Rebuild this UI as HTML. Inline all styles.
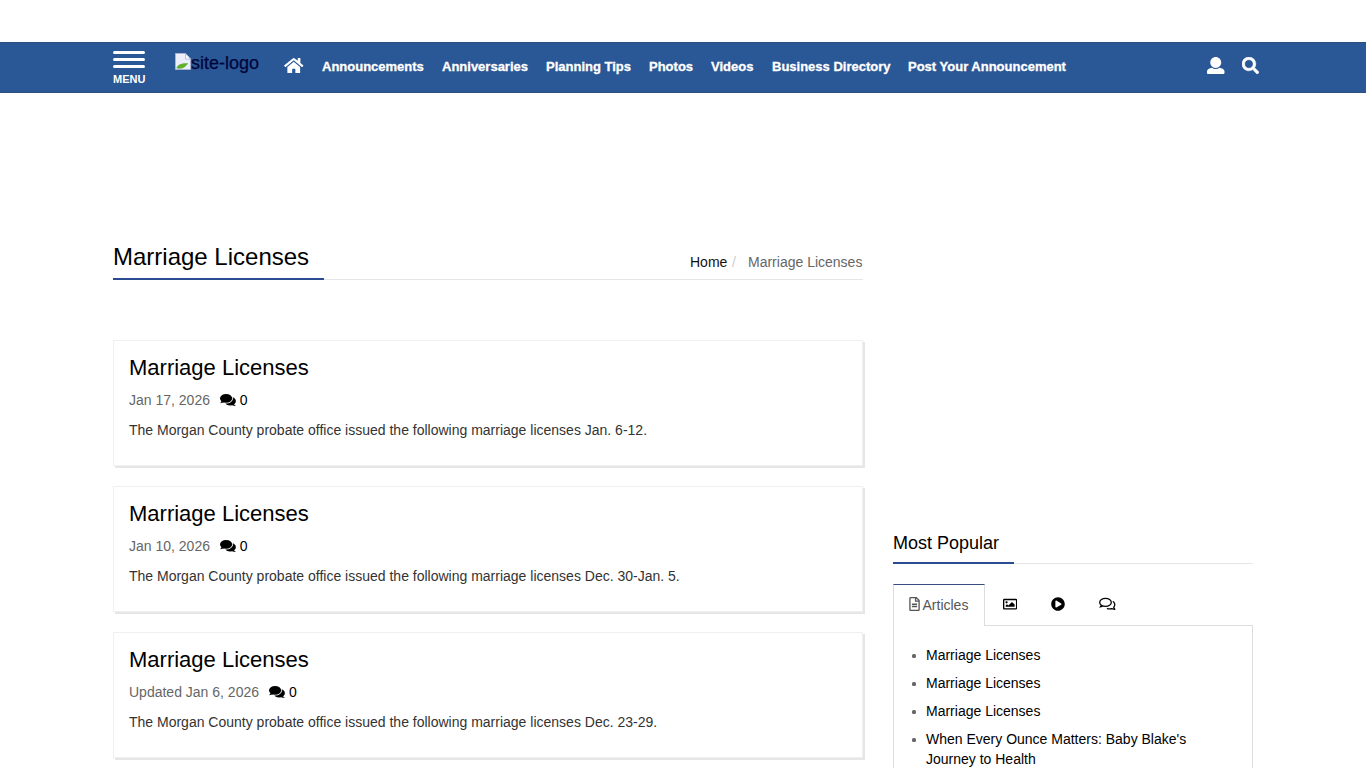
<!DOCTYPE html>
<html lang="en">
<head>
<meta charset="utf-8">
<title>Marriage Licenses</title>
<style>
*{box-sizing:border-box}
html,body{margin:0;padding:0}
body{width:1366px;height:768px;overflow:hidden;background:#fff;font-family:"Liberation Sans",Arial,sans-serif;font-size:14px;line-height:20px;color:#333;position:relative}
a{color:#000;text-decoration:none}
#nav{position:absolute;left:0;top:42px;width:1366px;height:51px;background:#2a5796;box-shadow:inset 0 1px 0 #2e4f80,inset 0 -1px 0 #2e4f80}
#nav .bar{position:absolute;left:113px;width:32px;height:3px;background:#fff;border-radius:1.5px}
#nav .menu{position:absolute;left:113px;top:31px;font-size:11px;line-height:12px;font-weight:bold;color:#fff}
#logo{position:absolute;left:175px;top:10px;height:22px;white-space:nowrap;font-size:18px;line-height:22px;color:#00053a}
#logo svg{position:absolute;left:0;top:1px}
#logo span{position:absolute;left:16px;top:0;-webkit-text-stroke:.25px #00053a}
#nav .home{position:absolute;left:284px;top:15px}
#nav .lnk{position:absolute;top:17px;font-size:13px;line-height:16px;font-weight:bold;color:#fff;white-space:nowrap;-webkit-text-stroke:.3px #fff}
#nav .user{position:absolute;left:1207px;top:14.500px}
#nav .search{position:absolute;left:1242px;top:15px}
h1{position:absolute;left:113px;top:242px;margin:0;font-size:24px;line-height:30px;font-weight:normal;color:#000;white-space:nowrap}
.hline{position:absolute;left:113px;top:279px;width:750px;height:1px;background:#e6e6e6}
.hline2{position:absolute;left:113px;top:278px;width:211px;height:2px;background:#2a4a92}
.crumb{position:absolute;top:252px;font-size:14px;line-height:20px;white-space:nowrap}
.card{position:absolute;left:113px;width:750px;height:126px;background:#fff;border:1px solid #f0f0f0;box-shadow:2px 2px 0 #e6e6e6}
.card h3{position:absolute;left:15px;top:13px;margin:0;font-size:22px;line-height:28px;font-weight:normal;color:#000;white-space:nowrap}
.card .meta{position:absolute;left:15px;top:49px;font-size:14px;line-height:20px;color:#666;white-space:nowrap}
.card .meta b{font-weight:normal;color:#000}
.card .meta svg{vertical-align:-2px;margin:0 3px 0 5px}
.card p{position:absolute;left:15px;top:79px;margin:0;font-size:14px;line-height:20px;color:#333;white-space:nowrap}
#mp{position:absolute;left:893px;top:531px;font-size:18px;line-height:24px;color:#000;white-space:nowrap}
.mpl{position:absolute;left:893px;top:563px;width:360px;height:1px;background:#e6e6e6}
.mpl2{position:absolute;left:893px;top:562px;width:121px;height:2px;background:#2a4a92}
#tabbox{position:absolute;left:893px;top:625px;width:360px;height:160px;border:1px solid #ddd}
#tab1{position:absolute;left:893px;top:584px;width:92px;height:42px;border:1px solid #ddd;border-top:1px solid #35507f;border-bottom:none;background:#fff}
#tab1 span{position:absolute;left:28.500px;top:10px;font-size:14px;line-height:20px;color:#555}
#tab1 svg{position:absolute;left:15px;top:12px}
.ti{position:absolute;top:597px}
ul{position:absolute;left:893px;top:645px;margin:0;padding:0;list-style:none;width:360px}
li{position:relative;padding-left:33px;font-size:14px;line-height:20px;color:#000;margin-bottom:8px}
li:before{content:"";position:absolute;left:18.500px;top:8.500px;width:4px;height:4px;border-radius:1.500px;background:#666}
</style>
</head>
<body>
<div id="nav">
  <div class="bar" style="top:9px"></div><div class="bar" style="top:16px"></div><div class="bar" style="top:23px"></div>
  <div class="menu">MENU</div>
  <div id="logo">
    <svg width="16" height="17" viewBox="0 0 16 17"><path d="M0.500 0.500h10l5 5.500v10.500h-15z" fill="#eceefc" stroke="#a9b3d6" stroke-width="1"/><path d="M10.500 0.500v5.500h5z" fill="#fff" stroke="#a9b3d6" stroke-width=".8"/><path d="M1.500 15.300C2 12 6.500 10 13.200 10.400L9.800 14C7.600 15.800 4 16 1.500 15.300z" fill="#5fb02b"/></svg>
    <span>site-logo</span>
  </div>
  <svg class="home" width="19.500" height="17" viewBox="0 0 576 512"><path fill="#fff" d="M280.4 148.3L96 300.1V464a16 16 0 0 0 16 16l112.100-.3a16 16 0 0 0 15.900-16V368a16 16 0 0 1 16-16h64a16 16 0 0 1 16 16v95.600a16 16 0 0 0 16 16.100L464 480a16 16 0 0 0 16-16V300L295.700 148.300a12.200 12.200 0 0 0-15.300 0zM571.600 251.500L488 182.600V44a12 12 0 0 0-12-12h-56a12 12 0 0 0-12 12v72.600L318.500 43a48 48 0 0 0-61 0L4.300 251.500a12 12 0 0 0-1.600 16.900l25.500 31a12 12 0 0 0 16.900 1.600l235.200-193.700a12.200 12.200 0 0 1 15.300 0L530.900 301a12 12 0 0 0 16.900-1.600l25.500-31a12 12 0 0 0-1.700-16.900z"/></svg>
  <a class="lnk" style="left:322px">Announcements</a>
  <a class="lnk" style="left:442px">Anniversaries</a>
  <a class="lnk" style="left:546px">Planning Tips</a>
  <a class="lnk" style="left:649px">Photos</a>
  <a class="lnk" style="left:711px">Videos</a>
  <a class="lnk" style="left:772px">Business Directory</a>
  <a class="lnk" style="left:908px">Post Your Announcement</a>
  <svg class="user" width="17.500" height="17.500" viewBox="0 0 512 512"><path fill="#fff" d="M256 0c88.400 0 160 71.600 160 160s-71.600 160-160 160S96 248.400 96 160 167.600 0 256 0zm183.300 333.800l-71.300-17.800c-74.900 53.900-165.700 41.900-223.900 0l-71.300 17.800C30 344.500 0 382.900 0 427V464c0 26.500 21.500 48 48 48h416c26.500 0 48-21.500 48-48v-37c0-44.100-30-82.500-72.700-93.200z"/></svg>
  <svg class="search" width="17" height="17" viewBox="0 0 512 512"><path fill="#fff" stroke="#fff" stroke-width="14" d="M505 442.700L405.300 343c-4.500-4.500-10.600-7-17-7H372c27.600-35.300 44-79.700 44-128C416 93.100 322.900 0 208 0S0 93.100 0 208s93.100 208 208 208c48.300 0 92.700-16.400 128-44v16.300c0 6.400 2.500 12.500 7 17l99.700 99.700c9.400 9.400 24.600 9.400 33.900 0l28.300-28.300c9.400-9.400 9.400-24.600.1-34zM208 336c-70.700 0-128-57.200-128-128 0-70.700 57.200-128 128-128 70.700 0 128 57.200 128 128 0 70.700-57.200 128-128 128z"/></svg>
</div>

<h1>Marriage Licenses</h1>
<div class="hline"></div><div class="hline2"></div>
<a class="crumb" style="left:690px;color:#111">Home</a>
<span class="crumb" style="left:732px;color:#ccc">/</span>
<span class="crumb" style="left:748px;color:#666">Marriage Licenses</span>

<div class="card" style="top:340px">
  <h3>Marriage Licenses</h3>
  <div class="meta">Jan 17, 2026 <svg width="18" height="14" viewBox="0 0 18 14"><ellipse cx="11.300" cy="8.100" rx="5.600" ry="4.300" fill="#000"/><path d="M14.500 11l2.500 2-3.600-.500z" fill="#000"/><ellipse cx="7.100" cy="5.300" rx="7" ry="5.300" fill="#fff"/><ellipse cx="7.100" cy="5.300" rx="6.100" ry="4.400" fill="#000"/><path d="M2.800 7.800L1.200 10.300 5.400 9.200z" fill="#000"/></svg><b>0</b></div>
  <p>The Morgan County probate office issued the following marriage licenses Jan. 6-12.</p>
</div>
<div class="card" style="top:486px">
  <h3>Marriage Licenses</h3>
  <div class="meta">Jan 10, 2026 <svg width="18" height="14" viewBox="0 0 18 14"><ellipse cx="11.300" cy="8.100" rx="5.600" ry="4.300" fill="#000"/><path d="M14.500 11l2.500 2-3.600-.500z" fill="#000"/><ellipse cx="7.100" cy="5.300" rx="7" ry="5.300" fill="#fff"/><ellipse cx="7.100" cy="5.300" rx="6.100" ry="4.400" fill="#000"/><path d="M2.800 7.800L1.200 10.300 5.400 9.200z" fill="#000"/></svg><b>0</b></div>
  <p>The Morgan County probate office issued the following marriage licenses Dec. 30-Jan. 5.</p>
</div>
<div class="card" style="top:632px">
  <h3>Marriage Licenses</h3>
  <div class="meta">Updated Jan 6, 2026 <svg width="18" height="14" viewBox="0 0 18 14"><ellipse cx="11.300" cy="8.100" rx="5.600" ry="4.300" fill="#000"/><path d="M14.500 11l2.500 2-3.600-.500z" fill="#000"/><ellipse cx="7.100" cy="5.300" rx="7" ry="5.300" fill="#fff"/><ellipse cx="7.100" cy="5.300" rx="6.100" ry="4.400" fill="#000"/><path d="M2.800 7.800L1.200 10.300 5.400 9.200z" fill="#000"/></svg><b>0</b></div>
  <p>The Morgan County probate office issued the following marriage licenses Dec. 23-29.</p>
</div>

<div id="mp">Most Popular</div>
<div class="mpl"></div><div class="mpl2"></div>
<div id="tabbox"></div>
<div id="tab1">
  <svg width="11" height="14" viewBox="0 0 384 512"><path fill="#555" d="M288 248v28c0 6.600-5.400 12-12 12H108c-6.600 0-12-5.400-12-12v-28c0-6.600 5.400-12 12-12h168c6.600 0 12 5.400 12 12zm-12 72H108c-6.600 0-12 5.400-12 12v28c0 6.600 5.400 12 12 12h168c6.600 0 12-5.400 12-12v-28c0-6.600-5.400-12-12-12zm108-188.100V464c0 26.500-21.500 48-48 48H48c-26.500 0-48-21.500-48-48V48C0 21.500 21.500 0 48 0h204.100C264.800 0 277 5.100 286 14.100L369.900 98c9 8.900 14.100 21.200 14.100 33.900zm-128-80V128h76.100L256 51.900zM336 464V176H232c-13.300 0-24-10.700-24-24V48H48v416h288z"/></svg>
  <span>Articles</span>
</div>
<svg class="ti" style="left:1002.600px;top:597.300px" width="14.300" height="14.300" viewBox="0 0 512 512"><path fill="#000" d="M464 64H48C21.500 64 0 85.500 0 112v288c0 26.500 21.500 48 48 48h416c26.500 0 48-21.500 48-48V112c0-26.500-21.500-48-48-48zm-6 336H54a6 6 0 0 1-6-6V118a6 6 0 0 1 6-6h404a6 6 0 0 1 6 6v276a6 6 0 0 1-6 6zM128 152c-22.100 0-40 17.900-40 40s17.900 40 40 40 40-17.900 40-40-17.900-40-40-40zM96 352h320v-80l-87.500-87.500c-4.700-4.700-12.300-4.700-17 0L192 304l-39.500-39.500c-4.700-4.700-12.300-4.700-17 0L96 304v48z"/></svg>
<svg class="ti" style="left:1051px" width="14" height="14" viewBox="0 0 512 512"><path fill="#000" d="M256 8C119 8 8 119 8 256s111 248 248 248 248-111 248-248S393 8 256 8zm115.700 272l-176 101c-15.800 8.800-35.700-2.500-35.700-21V152c0-18.400 19.800-29.800 35.700-21l176 107c16.400 9.200 16.400 32.900 0 42z"/></svg>
<svg class="ti" style="left:1098px;top:597px" width="18" height="14" viewBox="0 0 18 14"><g fill="none" stroke="#000" stroke-width="1.300" stroke-linejoin="round" stroke-linecap="round"><ellipse cx="7.500" cy="5.400" rx="5.800" ry="4"/><path d="M15.300 4.700C17.200 6.200 17.300 8.600 15.700 10.200L16.800 12.300 13.600 11.600C12.300 12 10.800 12 9.400 11.600"/></g><path d="M2.700 8.300L1.100 10.800 5.400 9.700z" fill="#000"/></svg>
<ul>
  <li>Marriage Licenses</li>
  <li>Marriage Licenses</li>
  <li>Marriage Licenses</li>
  <li>When Every Ounce Matters: Baby Blake's<br>Journey to Health</li>
</ul>
</body>
</html>
